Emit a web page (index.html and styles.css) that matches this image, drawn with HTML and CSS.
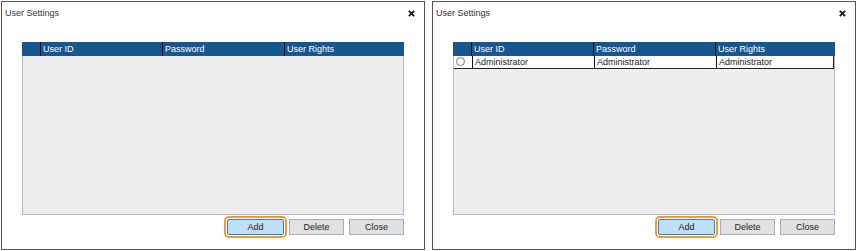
FILE: index.html
```html
<!DOCTYPE html>
<html lang="en">
<head>
  <meta charset="UTF-8" />
  <title>User Settings</title>
  <link rel="stylesheet" href="styles.css">
</head>
<body>
  <div class="screens">
    <div class="window">
      <div class="titlebar">
        <span class="title">User Settings</span>
        <svg class="close" width="7" height="7" viewBox="0 0 7 7"><path d="M0.8 0.8 L6.2 6.2 M6.2 0.8 L0.8 6.2" stroke="#111" stroke-width="1.7"/></svg>
      </div>
      <div class="grid">
        <div class="grid-head">
          <div class="cell"></div>
          <div class="cell">User ID</div>
          <div class="cell">Password</div>
          <div class="cell">User Rights</div>
        </div>
      </div>
      <div class="actions">
        <button class="btn btn-focus">Add</button>
        <button class="btn">Delete</button>
        <button class="btn">Close</button>
      </div>
    </div>

    <div class="window">
      <div class="titlebar">
        <span class="title">User Settings</span>
        <svg class="close" width="7" height="7" viewBox="0 0 7 7"><path d="M0.8 0.8 L6.2 6.2 M6.2 0.8 L0.8 6.2" stroke="#111" stroke-width="1.7"/></svg>
      </div>
      <div class="grid">
        <div class="grid-head">
          <div class="cell"></div>
          <div class="cell">User ID</div>
          <div class="cell">Password</div>
          <div class="cell">User Rights</div>
        </div>
        <div class="grid-row">
          <div class="cell"><span class="radio"></span></div>
          <div class="cell">Administrator</div>
          <div class="cell">Administrator</div>
          <div class="cell">Administrator</div>
        </div>
      </div>
      <div class="actions">
        <button class="btn btn-focus">Add</button>
        <button class="btn">Delete</button>
        <button class="btn">Close</button>
      </div>
    </div>
  </div>
</body>
</html>
```

FILE: styles.css
```css
* {
  margin: 0;
  padding: 0;
  box-sizing: border-box;
  font-family: 'Liberation Sans', Arial, sans-serif;
}

body {
  background: #fff;
  padding: 1px 0 0 1px;
}

.screens {
  display: flex;
  gap: 7px;
}

.window {
  width: 424px;
  height: 249px;
  border: 1px solid #555;
  display: flex;
  flex-direction: column;
}

.titlebar {
  height: 40px;
  display: flex;
  justify-content: space-between;
  align-items: flex-start;
  padding: 6px 9px 0 3px;
}

.title {
  font-size: 9px;
  line-height: 11px;
  color: #333;
}

.close {
  margin-top: 2px;
}

.grid {
  height: 173px;
  margin: 0 20px;
  border: 1px solid #a8b9cf;
  border-top: none;
  background: #eeeeee;
}

.grid-head,
.grid-row {
  display: grid;
  grid-template-columns: 18px 122px 122px 1fr;
  font-size: 9px;
}

.grid-head {
  height: 14px;
  background: #18568f;
  margin: 0 -1px;
}

.grid-head .cell {
  color: #fff;
  line-height: 14px;
  padding-left: 2px;
}

.grid-head .cell + .cell {
  border-left: 1.5px solid #0a0a0a;
}

.grid-row {
  height: 13px;
  background: #fff;
  border-bottom: 1px solid #222;
  border-right: 1px solid #222;
}

.grid-row .cell {
  color: #222;
  line-height: 12px;
  padding-left: 2px;
}

.grid-row .cell + .cell {
  border-left: 1px solid #111;
}

.radio {
  display: block;
  width: 9px;
  height: 9px;
  margin: 1px 0 0 0;
  border: 1px solid #7a7a7a;
  border-radius: 50%;
  background: #fff;
}

.actions {
  display: flex;
  justify-content: flex-end;
  gap: 5px;
  margin: 4px 20px 0;
}

.btn {
  width: 55px;
  height: 16px;
  font-size: 9px;
  color: #222;
  background: #e1e1e1;
  border: 1px solid #adadad;
  border-radius: 0;
}

.btn-focus {
  width: 57px;
  background: #bee0f7;
  border-color: #3b80b8;
  border-radius: 2px;
  box-shadow: 0 0 0 1px #fff, 0 0 0 3px #f29b35;
}
```
